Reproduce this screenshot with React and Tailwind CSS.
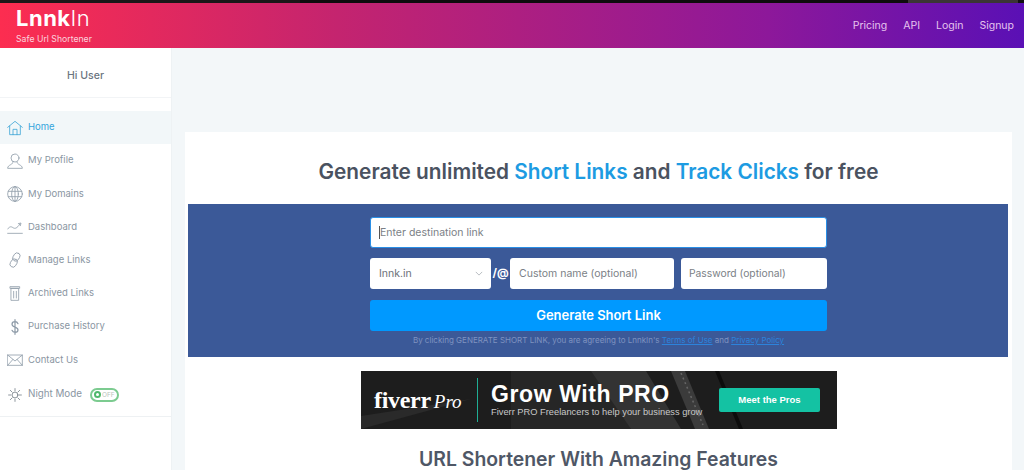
const font = { fontFamily: 'Inter, "Liberation Sans", sans-serif' };

function I({ children, color = "#8d9aa7", className = "w-[16px] h-[16px]" }) {
  return (
    <svg viewBox="0 0 24 24" fill="none" stroke={color} strokeWidth="1.2" strokeLinecap="round" strokeLinejoin="round" className={className}>
      {children}
    </svg>
  );
}

const items = [
  ["My Profile", <><circle cx="12" cy="7.500" r="6" /><path d="M9 13c0 2-1 3-3.500 4.500S1 20 1 23h22c0-3-2-4-4.500-5.500S15 15 15 13" /></>],
  ["My Domains", <><circle cx="12" cy="12" r="11" /><ellipse cx="12" cy="12" rx="5" ry="11" /><path d="M2 8h20M2 16h20M12 1v22" /></>],
  ["Dashboard", <><path d="M1 21.500h22" /><path d="M1 15c3-4 5-4 8-2s6 1 10-5" /><path d="M17 7l4-1-1 4" /></>],
  ["Manage Links", <><rect x="9.500" y="1" width="9" height="13" rx="4.500" transform="rotate(32 14 7.500)" /><rect x="5.500" y="10" width="9" height="13" rx="4.500" transform="rotate(32 10 16.500)" /></>],
  ["Archived Links", <><path d="M6.500 5h11v18h-11zM5 2.500h14V5H5zM10 9.500v10M14 9.500v10" /></>],
  ["Purchase History", <path strokeWidth="1.800" d="M16.500 7c-.8-2-2.500-3-4.500-3-2.800 0-4.500 1.700-4.500 4 0 5.500 9 3 9 8.500 0 2.300-1.700 3.500-4.500 3.500-2 0-3.700-1-4.500-3M12 1v22" />],
  ["Contact Us", <><rect x="1" y="4.500" width="22" height="15.500" /><path d="M1 4.500l11 9 11-9M1 20l8-9M23 20l-8-9" /></>],
];

function Row({ label, icon }) {
  return (
    <div className="h-[33.2px] flex items-center pl-[7px]">
      <span className="w-[16px] flex justify-center"><I>{icon}</I></span>
      <span className="ml-[5px] text-[9.500px] text-[#8a96a2]">{label}</span>
    </div>
  );
}

export default function App() {
  return (
    <div style={font} className="w-[1024px] h-[470px] overflow-hidden bg-[#f3f7f9] flex flex-col">
      <div className="h-[3px] flex">
        <div className="flex-1 bg-[#1b1718]" />
        <div className="w-[608px] bg-[#0e0c0d]" />
        <div className="w-[110px] bg-[#3b3536]" />
        <div className="w-[6px] bg-[#111]" />
      </div>
      <header className="h-[45px] shrink-0 flex items-center justify-between pl-[16px] pr-[10px] bg-[linear-gradient(to_right,#fc2d50,#c4246f_33%,#8d189a_75%,#5a10b5)]">
        <div className="text-white pt-[3px]">
          <div className="text-[22px] leading-[20px] font-bold tracking-[0.5px]">Lnnk<span className="font-light">In</span></div>
          <div className="text-[8.700px] leading-[13px] text-[#fbd3dd] mt-[5px]">Safe Url Shortener</div>
        </div>
        <nav className="flex gap-[16px] text-[10.500px] text-[#e6c3ee]">
          <span>Pricing</span><span>API</span><span>Login</span><span>Signup</span>
        </nav>
      </header>
      <div className="flex flex-1 min-h-0">
        <aside className="w-[172px] shrink-0 bg-white border-r border-[#eef2f4]">
          <div className="h-[50px] pt-[6px] flex items-center justify-center text-[10.500px] font-medium text-[#6b7580] border-b border-[#f2f4f6]">Hi User</div>
          <div className="mt-[13px]">
            <div className="h-[33px] flex items-center pl-[7px] bg-[#f2f7f9]">
              <span className="w-[16px] flex justify-center">
                <I color="#3aa3d6"><path d="M1 11 12 2l11 9M4 9v13h16V9M9 22v-8h6v8" /></I>
              </span>
              <span className="ml-[5px] text-[9.500px] text-[#35a5dc]">Home</span>
            </div>
            {items.map(([l, ic]) => <Row key={l} label={l} icon={ic} />)}
            <div className="h-[41px] pb-[3px] flex items-center pl-[7px] border-b border-[#eef1f3]">
              <span className="w-[15px] flex justify-center">
                <I color="#5f6b76" className="w-[14px] h-[14px]"><circle cx="12" cy="12" r="5" /><path d="M12 1v4M12 19v4M1 12h4M19 12h4M4 4l3 3M17 17l3 3M4 20l3-3M17 7l3-3" /></I>
              </span>
              <span className="ml-[6px] text-[9.800px] text-[#8a96a2]">Night Mode</span>
              <span className="ml-[8px] w-[29px] h-[14px] rounded-full border-2 border-[#7ccb90] flex items-center pl-[2px] gap-[1px]">
                <span className="w-[7px] h-[7px] rounded-full border-2 border-[#4fb86b]" />
                <span className="text-[6.500px] leading-none text-[#b8c4bb]">OFF</span>
              </span>
            </div>
          </div>
        </aside>
        <main className="flex-1 pt-[84px] pl-[13px] pr-[12px]">
          <section className="bg-white h-[400px] px-[3px]">
            <h1 className="text-center text-[20.800px] leading-[26px] font-semibold text-[#4a5260] pt-[27px] h-[72px] whitespace-nowrap">
              Generate unlimited <span className="text-[#1d9be2]">Short Links</span> and <span className="text-[#1d9be2]">Track Clicks</span> for free
            </h1>
            <div className="w-[820px] h-[153px] bg-[#3b5998] pt-[13px] pl-[182px]">
              <div className="w-[457px]">
                <div className="h-[31px] bg-white rounded-[3px] border border-[#2a8fe6] flex items-center pl-[8px] text-[10.500px] text-[#7b7f86]">
                  <span className="w-px h-[13px] bg-[#555]" />Enter destination link
                </div>
                <div className="mt-[10px] flex items-center">
                  <div className="w-[121px] h-[31px] bg-white rounded-[3px] flex items-center justify-between pl-[9px] pr-[8px] text-[10.500px] text-[#6c7178]">
                    Innk.in
                    <svg viewBox="0 0 10 6" className="w-[8px] h-[5px]" fill="none" stroke="#a7adb3" strokeWidth="1"><path d="M1 1l4 4 4-4" /></svg>
                  </div>
                  <span className="w-[19px] text-center text-[11.500px] font-bold text-white">/@</span>
                  <div className="w-[164px] h-[31px] bg-white rounded-[3px] flex items-center pl-[9px] text-[10.500px] text-[#7b7f86]">Custom name (optional)</div>
                  <div className="ml-[7px] w-[146px] h-[31px] bg-white rounded-[3px] flex items-center pl-[8px] text-[10.300px] text-[#7b7f86]">Password (optional)</div>
                </div>
                <div className="mt-[11px] h-[31px] bg-[#0099ff] rounded-[3px] flex items-center justify-center text-[13px] font-semibold text-white">Generate Short Link</div>
                <p className="mt-[3px] text-center text-[8px] leading-[13px] text-[#7f93c0] whitespace-nowrap">
                  By clicking GENERATE SHORT LINK, you are agreeing to LnnkIn's <span className="underline text-[#2c83dc]">Terms of Use</span> and <span className="underline text-[#2c83dc]">Privacy Policy</span>
                </p>
              </div>
            </div>
            <div className="mt-[14px] ml-[173px] w-[476px] h-[58px] bg-[#1d1d1d] flex items-center relative overflow-hidden" style={{ fontFamily: '"Liberation Sans", sans-serif' }}>
              <svg viewBox="0 0 476 58" className="absolute inset-0 w-full h-full">
                <path d="M0 58 110 28 0 45z" fill="#2a2a2a" />
                <path d="M150 0h90l30 58h-120z" fill="#262626" />
                <path d="M230 0h55l35 58h-50z" fill="#333" />
                <path d="M310 0h14l24 58h-14z" fill="#3b3b3b" />
                <path d="M320 2l22 52" stroke="#666" strokeWidth="1.500" strokeDasharray="2 3" fill="none" />
                <path d="M354 0h4l24 58h-4z" fill="#0c0c0c" />
              </svg>
              <div className="relative w-[116px] shrink-0 pl-[13px] flex items-baseline whitespace-nowrap" style={{ fontFamily: '"Liberation Serif", serif' }}>
                <span className="text-[24px] leading-none font-bold text-white tracking-[-0.3px]">fiverr</span>
                <span className="text-[19px] leading-none italic text-white ml-[3px]">Pro</span>
              </div>
              <span className="relative w-px h-[44px] bg-[#1fae95]" />
              <div className="relative ml-[13px] w-[228px]">
                <div className="text-[23px] leading-[25px] font-bold text-white tracking-[0.6px] whitespace-nowrap">Grow With PRO</div>
                <div className="text-[9.300px] leading-[11px] text-[#c9c9c9] whitespace-nowrap">Fiverr PRO Freelancers to help your business grow</div>
              </div>
              <div className="relative w-[101px] h-[24px] bg-[#14c2a3] rounded-[2px] flex items-center justify-center text-[9.500px] font-bold text-white">Meet the Pros</div>
            </div>
            <h2 className="text-center text-[19.400px] leading-[24px] font-semibold text-[#4f5766] mt-[18px] whitespace-nowrap">URL Shortener With Amazing Features</h2>
          </section>
        </main>
      </div>
    </div>
  );
}
